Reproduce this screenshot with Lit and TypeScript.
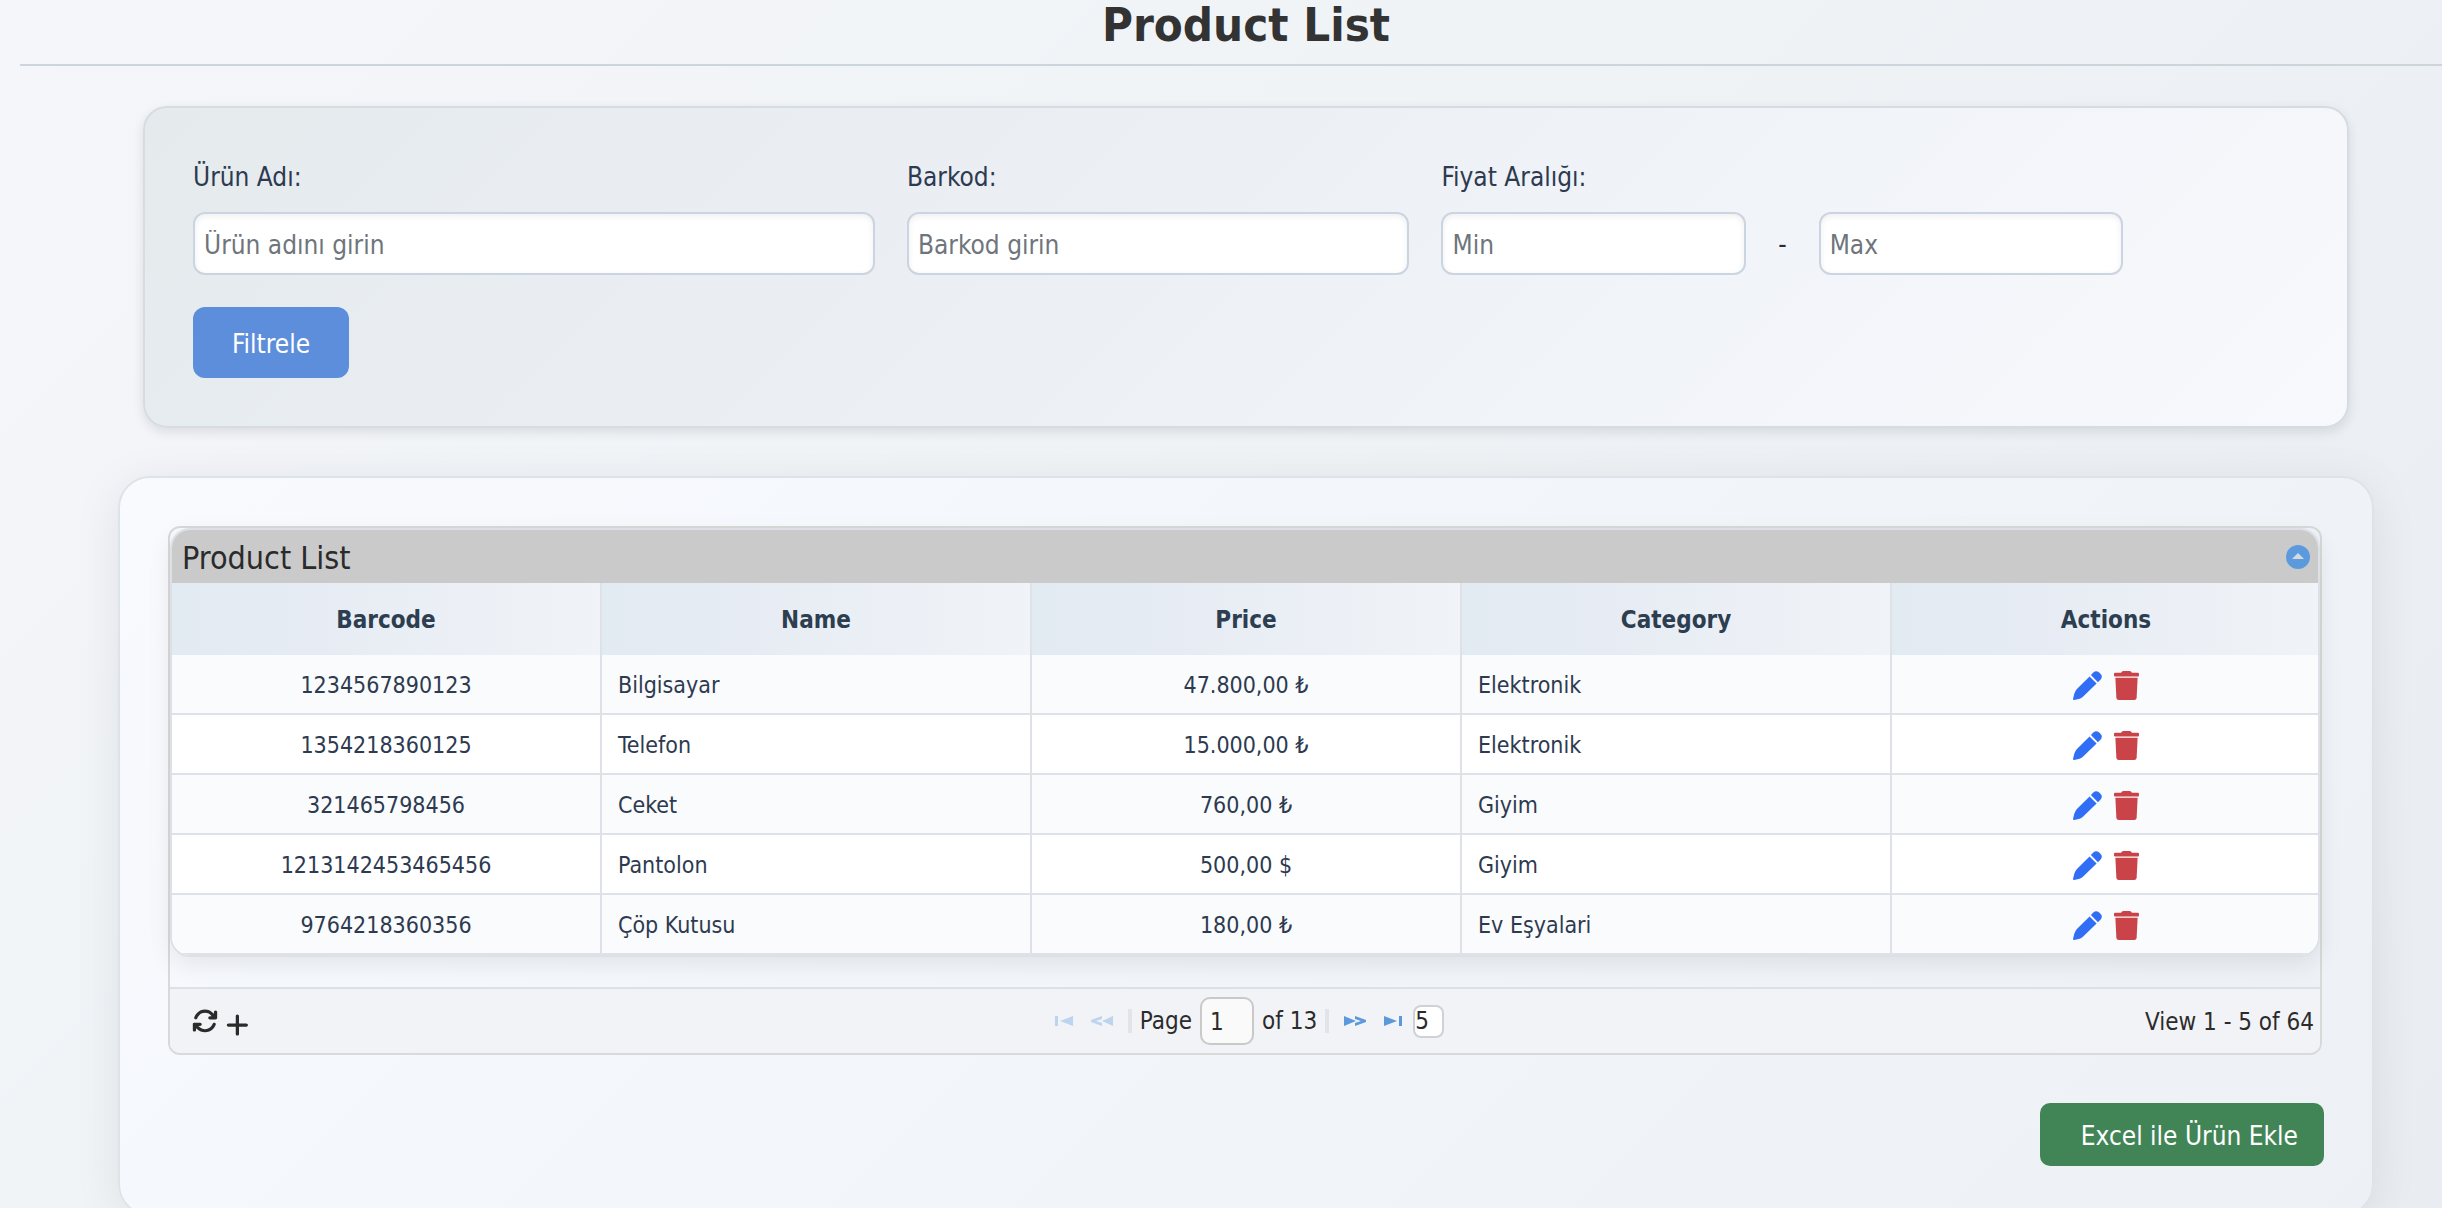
import { LitElement, html, css, svg } from "lit";
import { customElement, state } from "lit/decorators.js";

interface Product {
  barcode: string;
  name: string;
  price: string;
  category: string;
}

const PRODUCTS: Product[] = [
  { barcode: "1234567890123", name: "Bilgisayar", price: "47.800,00 ₺", category: "Elektronik" },
  { barcode: "1354218360125", name: "Telefon", price: "15.000,00 ₺", category: "Elektronik" },
  { barcode: "321465798456", name: "Ceket", price: "760,00 ₺", category: "Giyim" },
  { barcode: "1213142453465456", name: "Pantolon", price: "500,00 $", category: "Giyim" },
  { barcode: "9764218360356", name: "Çöp Kutusu", price: "180,00 ₺", category: "Ev Eşyalari" },
];

const pencil = html`<svg class="row-icon" viewBox="0 0 86 86" aria-hidden="true">
  ${svg`<path d="M53 12 61 4Q68-3 77 4L82 9Q89 17 82 25L74 33Z"/><path d="M49 16 70 37 31 75Q26 80 20 82L3 86Q0 86 0 83L4 67Q6 60 11 54Z"/>`}
</svg>`;

const trash = html`<svg class="row-icon trash-icon" viewBox="0 0 74 86" aria-hidden="true">
  ${svg`<path d="M21 5 23 2Q25 0 28 0H46Q49 0 51 2L53 5H71Q74 5 74 8V13Q74 16 71 16H3Q0 16 0 13V8Q0 5 3 5Z"/><path d="M4 20H70L67 80Q66 86 60 86H14Q8 86 7 80Z"/>`}
</svg>`;

const refresh = html`<svg class="tool-icon" viewBox="0 0 512 512" aria-hidden="true">
  ${svg`<path d="M105.1 202.6c7.7-21.8 20.2-42.3 37.8-59.8c62.5-62.5 163.8-62.5 226.3 0L386.3 160H352c-17.7 0-32 14.3-32 32s14.3 32 32 32H463.5h.4c17.7 0 32-14.3 32-32V80c0-17.7-14.3-32-32-32s-32 14.3-32 32v35.2L414.4 97.6c-87.5-87.5-229.3-87.5-316.8 0C73.2 122 55.6 150.7 44.8 181.4c-5.9 16.7 2.9 34.9 19.5 40.8s34.9-2.9 40.8-19.5zM39 289.3c-5 1.5-9.8 4.2-13.7 8.2c-4 4-6.7 8.8-8.1 14c-.3 1.2-.6 2.5-.8 3.8c-.3 1.7-.4 3.4-.4 5.1V432c0 17.7 14.3 32 32 32s32-14.3 32-32V396.9l17.6 17.5c87.5 87.4 229.3 87.4 316.7 0c24.4-24.4 42.1-53.1 52.9-83.7c5.9-16.7-2.9-34.9-19.5-40.8s-34.9 2.9-40.8 19.5c-7.7 21.8-20.2 42.3-37.8 59.8c-62.5 62.5-163.8 62.5-226.3 0l-.1-.1L125.6 352H160c17.7 0 32-14.3 32-32s-14.3-32-32-32H48.4c-1.6 0-3.2 .1-4.8 .3s-3.1 .5-4.6 1z"/>`}
</svg>`;

const plus = html`<svg class="tool-icon" viewBox="0 0 448 512" aria-hidden="true">
  ${svg`<path d="M256 80c0-17.7-14.3-32-32-32s-32 14.3-32 32V224H48c-17.7 0-32 14.3-32 32s14.3 32 32 32H192V432c0 17.7 14.3 32 32 32s32-14.3 32-32V288H400c17.7 0 32-14.3 32-32s-14.3-32-32-32H256V80z"/>`}
</svg>`;

const toFirst = html`<svg class="nav-icon" viewBox="0 0 24 12" aria-hidden="true">
  ${svg`<path d="M3 1h3v10H3zM21 1v10L8 6z"/>`}
</svg>`;
const toPrev = html`<svg class="nav-icon" viewBox="0 0 24 12" aria-hidden="true">
  ${svg`<path d="M23 1v10L12 6z"/><path d="M12 1v3L6 6l6 2v3L1 7V5z"/>`}
</svg>`;
const toNext = html`<svg class="nav-icon" viewBox="0 0 24 12" aria-hidden="true">
  ${svg`<path d="M1 1v10l12-5z"/><path d="M12 1v3l6 2-6 2v3l11-4V5z"/>`}
</svg>`;
const toLast = html`<svg class="nav-icon" viewBox="0 0 24 12" aria-hidden="true">
  ${svg`<path d="M18 1h3v10h-3zM3 1v10l13-5z"/>`}
</svg>`;

const collapse = html`<svg class="collapse-icon" viewBox="0 0 24 24" aria-hidden="true">
  ${svg`<circle cx="12" cy="12" r="12" fill="#5c9ade"/><path d="M12 8 18 14H6z" fill="#d3dbe0"/>`}
</svg>`;

@customElement("app-root")
export class AppRoot extends LitElement {
  @state() private open = true;

  static styles = css`
    :host {
      display: block;
      height: 100vh;
      overflow: hidden;
      box-sizing: border-box;
      background: linear-gradient(135deg, #f5f6fa, #eff3f6 45%, #e9edf2);
      color: #2b2b2b;
      font-family: "DejaVu Sans Condensed", "DejaVu Sans", sans-serif;
      font-size: 23px;
    }
    * {
      box-sizing: border-box;
    }
    button,
    input,
    select {
      font: inherit;
      color: inherit;
      margin: 0;
    }
    button {
      border: 0;
      padding: 0;
      background: none;
      cursor: pointer;
    }
    .page {
      margin-right: -50px;
      padding: 0 20px;
    }
    .title {
      margin: 0 0 40px;
      padding-bottom: 14px;
      border-bottom: 2px solid #ccd4dc;
      text-align: center;
      font-size: 47px;
      line-height: 50px;
      font-weight: 700;
      color: #333;
    }
    .filter {
      display: grid;
      grid-template-columns: 19fr 14fr 19fr 4fr;
      gap: 32px;
      margin: 0 123px 48px;
      padding: 48px;
      border: 2px solid #d5dde1;
      border-radius: 24px;
      background: linear-gradient(135deg, #e5eaed, #ecf0f5 45%, #f8f9fd);
      box-shadow: 0 4px 12px rgba(0, 0, 0, 0.1);
    }
    .field {
      display: flex;
      flex-direction: column;
      gap: 14px;
      min-width: 0;
      font-size: 26px;
      line-height: 42px;
    }
    .label {
      color: #2d3a50;
    }
    .range {
      display: flex;
      align-items: center;
      gap: 32px;
    }
    .box {
      width: 100%;
      min-width: 0;
      height: 63px;
      padding: 2px 9px 0;
      border: 2px solid #cbd4e1;
      border-radius: 12px;
      background: #fff;
      box-shadow: inset 0 2px 6px rgba(0, 0, 0, 0.07);
    }
    .box::placeholder {
      color: #6f757c;
      opacity: 1;
    }
    .filter-button {
      justify-self: start;
      height: 71px;
      padding: 2px 39px 0;
      border-radius: 12px;
      background: #5d8edb;
      color: #fff;
      font-size: 26px;
    }
    .card {
      display: flex;
      flex-direction: column;
      margin: 0 98px;
      padding: 48px;
      border: 2px solid #dce4ea;
      border-radius: 32px;
      background: linear-gradient(135deg, #f9fafe, #f3f7fb 40%, #edf1f6);
      box-shadow: 0 8px 48px rgba(0, 0, 0, 0.08);
    }
    .grid {
      margin-right: 2px;
      border: 2px solid #d9d9d9;
      border-radius: 12px;
    }
    .view {
      overflow: hidden;
      margin-bottom: 30px;
      border: 2px solid #dde1e7;
      border-radius: 20px;
      box-shadow: 0 8px 24px rgba(0, 0, 0, 0.08);
    }
    .caption {
      display: flex;
      align-items: center;
      justify-content: space-between;
      height: 53px;
      padding: 0 8px 0 10px;
      background: #cacaca;
    }
    .caption-text {
      margin: 0;
      padding-top: 2px;
      font-size: 32px;
      font-weight: 400;
    }
    .collapse {
      display: flex;
    }
    .collapse-icon {
      width: 24px;
      height: 24px;
    }
    .products {
      width: calc(100% + 4px);
      table-layout: fixed;
      border-collapse: separate;
      border-spacing: 0;
      color: #2d3a50;
    }
    .head {
      height: 72px;
      padding: 2px 0 0;
      border-right: 2px solid #dee1e7;
      background: linear-gradient(90deg, #e2eaf2, #e7ecf4 35%, #f0f3f7);
      color: #2c3e50;
      font-size: 24px;
      font-weight: 700;
    }
    .cell {
      height: 60px;
      padding: 2px 16px 0;
      border-right: 2px solid #dee1e7;
      border-bottom: 2px solid #dee1e7;
      background: #fff;
      text-align: center;
    }
    .row:nth-child(odd) .cell {
      background: #fafbfd;
    }
    .left {
      text-align: left;
    }
    .actions {
      display: flex;
      justify-content: center;
      gap: 12px;
    }
    .action {
      display: flex;
    }
    .row-icon {
      height: 29px;
      width: 29px;
      fill: #316ef6;
    }
    .trash-icon {
      width: 25px;
      fill: #c94349;
    }
    .pager {
      display: grid;
      grid-template-columns: 1fr auto 1fr;
      align-items: center;
      height: 66px;
      padding: 0 6px;
      border-top: 2px solid #dce1e8;
      border-radius: 0 0 10px 10px;
      background: #f2f3f6;
      font-size: 24px;
    }
    .tools {
      display: flex;
      align-items: center;
      gap: 8px;
      padding-left: 16px;
    }
    .tool {
      display: flex;
    }
    .tool-add {
      padding-top: 8px;
    }
    .tool-icon {
      height: 26px;
      fill: #2b2b2b;
    }
    .pages {
      display: flex;
      align-items: center;
      gap: 8px;
    }
    .navs {
      display: flex;
      gap: 14px;
      padding: 0 6px;
    }
    .navs-forward {
      padding-right: 0;
    }
    .nav {
      display: flex;
      color: #5c99dc;
    }
    .nav:disabled {
      color: #bdd4ee;
      cursor: default;
    }
    .nav-icon {
      width: 24px;
      height: 12px;
      fill: currentColor;
    }
    .separator {
      width: 4px;
      height: 24px;
      background: #e3e4e8;
    }
    .page-label {
      display: flex;
      align-items: center;
      gap: 8px;
    }
    .page-input {
      width: 54px;
      height: 48px;
      padding: 2px 8px 0;
      border: 2px solid #c9c9c9;
      border-radius: 10px;
      background: #fafafa;
    }
    .size {
      appearance: none;
      width: 31px;
      height: 33px;
      padding: 0;
      border: 2px solid #ced2d8;
      border-radius: 8px;
      background: #fff;
    }
    .summary {
      justify-self: end;
      padding-top: 2px;
    }
    .excel {
      align-self: flex-end;
      height: 63px;
      margin-top: 48px;
      padding: 2px 26px 0 41px;
      border-radius: 10px;
      background: #418557;
      color: #fff;
      font-size: 26px;
    }
  `;

  render() {
    return html`
      <main class="page">
        <h1 class="title">Product List</h1>
        <form class="filter" @submit=${(e: Event) => e.preventDefault()}>
          <div class="field">
            <label class="label" for="name">Ürün Adı:</label>
            <input class="box" id="name" type="text" placeholder="Ürün adını girin" />
          </div>
          <div class="field">
            <label class="label" for="barcode">Barkod:</label>
            <input class="box" id="barcode" type="text" placeholder="Barkod girin" />
          </div>
          <div class="field">
            <label class="label" for="min">Fiyat Aralığı:</label>
            <div class="range">
              <input class="box" id="min" type="text" inputmode="decimal" placeholder="Min" />
              <label for="max">-</label>
              <input class="box" id="max" type="text" inputmode="decimal" placeholder="Max" />
            </div>
          </div>
          <span></span>
          <button class="filter-button" type="submit">Filtrele</button>
        </form>

        <section class="card">
          <div class="grid">
            <div class="view">
              <div class="caption">
                <h2 class="caption-text">Product List</h2>
                <button class="collapse" aria-label="Toggle" @click=${() => (this.open = !this.open)}>${collapse}</button>
              </div>
              <table class="products" ?hidden=${!this.open}>
                <thead>
                  <tr>
                    ${["Barcode", "Name", "Price", "Category", "Actions"].map((h) => html`<th class="head" scope="col">${h}</th>`)}
                  </tr>
                </thead>
                <tbody>
                  ${PRODUCTS.map(
                    (p) => html`<tr class="row">
                      <td class="cell">${p.barcode}</td>
                      <td class="cell left">${p.name}</td>
                      <td class="cell">${p.price}</td>
                      <td class="cell left">${p.category}</td>
                      <td class="cell">
                        <div class="actions">
                          <button class="action" aria-label="Edit">${pencil}</button>
                          <button class="action" aria-label="Delete">${trash}</button>
                        </div>
                      </td>
                    </tr>`
                  )}
                </tbody>
              </table>
            </div>
            <div class="pager">
              <div class="tools">
                <button class="tool" aria-label="Refresh">${refresh}</button>
                <button class="tool tool-add" aria-label="Add">${plus}</button>
              </div>
              <div class="pages">
                <div class="navs">
                  <button class="nav" aria-label="First" disabled>${toFirst}</button>
                  <button class="nav" aria-label="Previous" disabled>${toPrev}</button>
                </div>
                <span class="separator"></span>
                <label class="page-label">Page <input class="page-input" type="text" .value=${"1"} /></label>
                <span>of 13</span>
                <span class="separator"></span>
                <div class="navs navs-forward">
                  <button class="nav" aria-label="Next">${toNext}</button>
                  <button class="nav" aria-label="Last">${toLast}</button>
                </div>
                <select class="size" aria-label="Rows">
                  <option>5</option>
                  <option>10</option>
                  <option>20</option>
                </select>
              </div>
              <span class="summary">View 1 - 5 of 64</span>
            </div>
          </div>
          <button class="excel">Excel ile Ürün Ekle</button>
        </section>
      </main>
    `;
  }
}
